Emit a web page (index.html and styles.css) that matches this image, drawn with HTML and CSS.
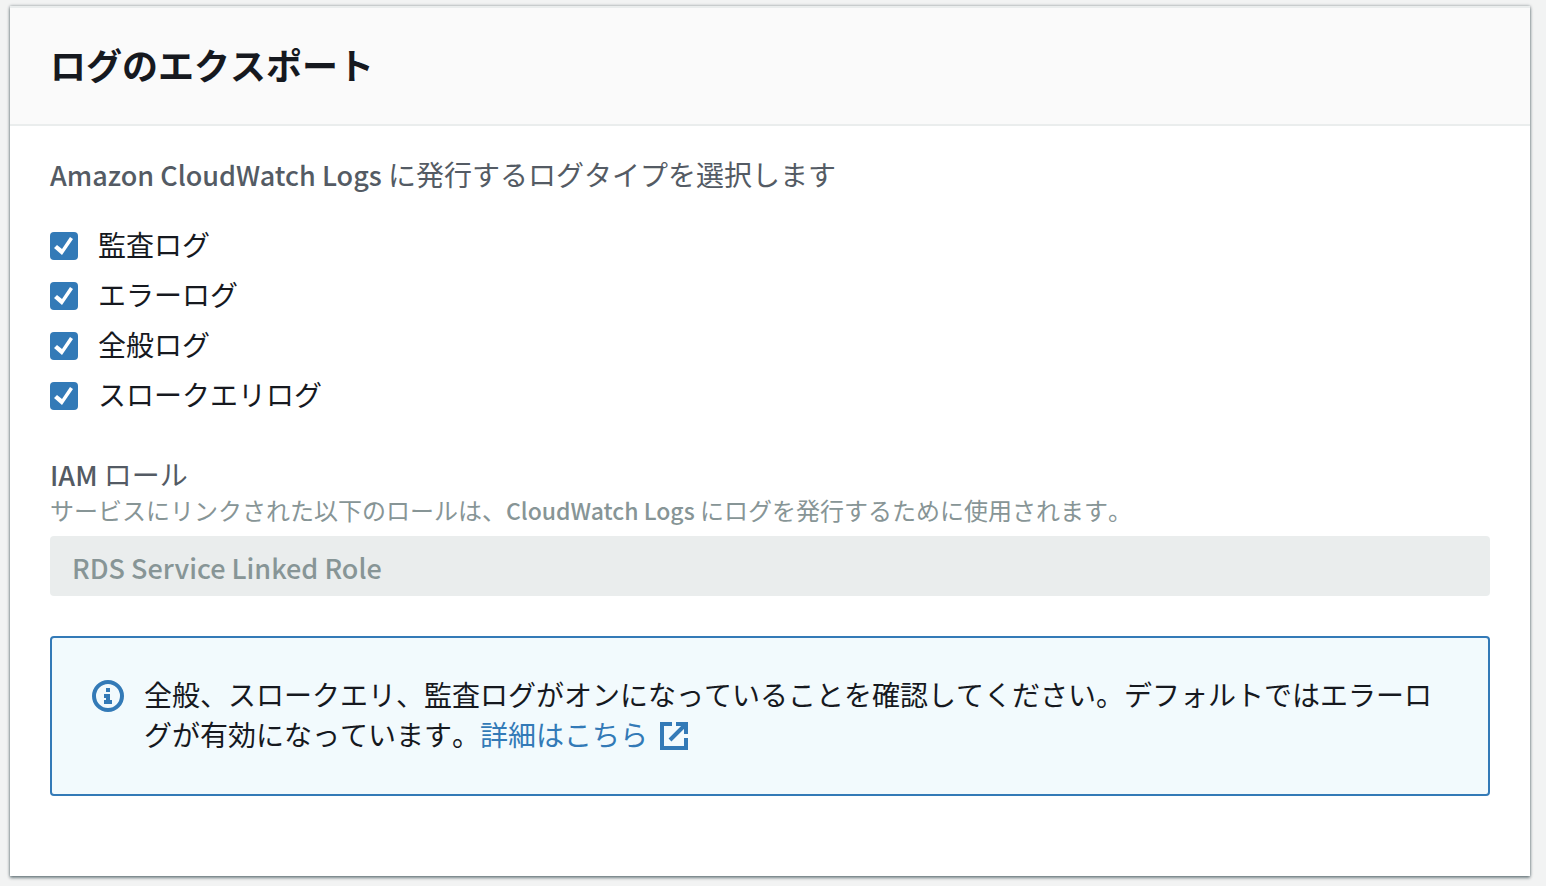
FILE: index.html
```html
<!DOCTYPE html>
<html lang="ja">
<head>
<meta charset="utf-8">
<title>ログのエクスポート</title>
<link rel="stylesheet" href="styles.css">
</head>
<body>
<section class="card">
  <header class="card-header">
    <h2 class="card-title">ログのエクスポート</h2>
  </header>
  <div class="card-body">
    <fieldset class="log-types">
      <legend class="field-label"><span class="latin">Amazon CloudWatch Logs</span> に発行するログタイプを選択します</legend>
      <label class="check-row"><input class="check" type="checkbox" checked>監査ログ</label>
      <label class="check-row"><input class="check" type="checkbox" checked>エラーログ</label>
      <label class="check-row"><input class="check" type="checkbox" checked>全般ログ</label>
      <label class="check-row"><input class="check" type="checkbox" checked>スロークエリログ</label>
    </fieldset>
    <div class="field">
      <label class="field-label" for="role"><span class="latin">IAM</span> ロール</label>
      <p class="field-hint" id="role-hint">サービスにリンクされた以下のロールは、<span class="latin latin-small">CloudWatch Logs</span> にログを発行するために使用されます。</p>
      <input class="text-input" id="role" type="text" value="RDS Service Linked Role" aria-describedby="role-hint" disabled>
    </div>
    <div class="alert">
      <svg class="info-icon" viewBox="0 0 32 32" aria-hidden="true">
        <circle cx="16" cy="16" r="14" fill="none" stroke="currentColor" stroke-width="4"/>
        <path fill="currentColor" d="M14 8h4v4h-4zM12 14h6v6h2v4h-8v-4h2v-2h-2z"/>
      </svg>
      <p class="alert-text">全般、スロークエリ、監査ログがオンになっていることを確認してください。デフォルトではエラーログが有効になっています。<a class="link" href="#">詳細はこちら<svg class="external-icon" viewBox="0 0 28 28" aria-hidden="true">
        <path fill="none" stroke="currentColor" stroke-width="4" d="M12 2H2v24h24V16M10 18 24 4"/>
        <path fill="currentColor" d="M16 0h12v12h-4V6.500L21.500 4H16z"/>
      </svg></a></p>
    </div>
  </div>
</section>
</body>
</html>
```
FILE: styles.css
```css
* {
  box-sizing: border-box;
}

body {
  margin: 0;
  padding: 6px 16px 10px 10px;
  background: #f2f3f3;
  color: #16191f;
  font-family: "Noto Sans CJK JP", sans-serif;
  font-size: 28px;
  font-kerning: none;
  line-height: 40px;
}

.card {
  background: #fff;
  border-top: 2px solid #eaeded;
  box-shadow: 0 2px 3px 0 rgba(0, 28, 36, 0.45), 0 0 3px 0 rgba(0, 28, 36, 0.4);
}

.card-header {
  padding: 34px 40px 38px;
  background: #fafafa;
  border-bottom: 2px solid #eaeded;
}

.card-title {
  margin: 0;
  font-size: 36px;
  line-height: 44px;
  font-weight: 700;
}

.card-body {
  display: flex;
  flex-direction: column;
  gap: 40px;
  padding: 28px 40px 80px;
}

.log-types {
  display: flex;
  flex-direction: column;
  align-items: flex-start;
  gap: 10px;
  margin: 0;
  padding: 0;
  border: 0;
}

.field-label {
  display: block;
  padding: 0;
  color: #545b64;
}

.log-types .field-label {
  margin-bottom: 30px;
}

.latin {
  font-size: 27px;
  font-weight: 500;
  font-kerning: normal;
  line-height: 1;
}

.latin-small {
  font-size: 23px;
}

.check-row {
  display: flex;
  align-items: flex-start;
  gap: 20px;
}

.check {
  appearance: none;
  display: grid;
  width: 28px;
  height: 28px;
  margin: 8px 0 0;
  background: #337ab7;
  border-radius: 4px;
}

.check:checked::before {
  content: "";
  background: #fff;
  clip-path: polygon(4px 16px, 7px 13px, 12px 17px, 20px 5px, 23px 7px, 12px 23px);
}

.field-hint {
  margin: 0 0 10px;
  color: #879596;
  font-size: 24px;
  line-height: 32px;
}

.text-input {
  display: block;
  width: 100%;
  height: 60px;
  padding: 2px 22px 0;
  border: 0;
  border-radius: 4px;
  background: #eaeded;
  color: #879596;
  font: 500 27px "Noto Sans CJK JP", sans-serif;
}

.alert {
  display: flex;
  gap: 20px;
  padding: 36px 40px 40px;
  border: 2px solid #337ab7;
  border-radius: 4px;
  background: #f1faff;
  background: #f2fafd;
}

.info-icon {
  flex: none;
  width: 32px;
  height: 32px;
  margin-top: 6px;
  color: #337ab7;
}

.alert-text {
  flex: 1;
  margin: 0;
}

.link {
  color: #337ab7;
  text-decoration: none;
}

.external-icon {
  width: 28px;
  height: 28px;
  margin-left: 12px;
  vertical-align: -4px;
}
```
